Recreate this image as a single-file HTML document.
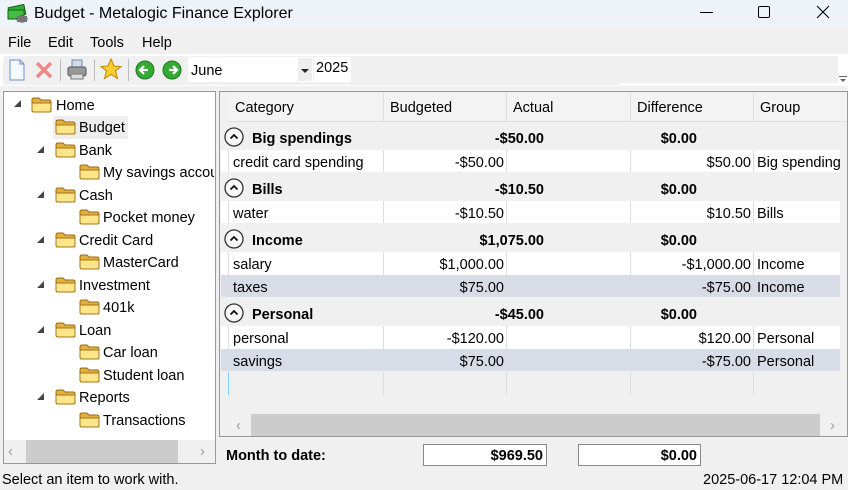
<!DOCTYPE html>
<html><head><meta charset="utf-8"><style>
*{margin:0;padding:0;box-sizing:border-box}
body{width:848px;height:485px;overflow:hidden;background:#f0f0f0;font-family:"Liberation Sans",sans-serif;font-size:14.5px;color:#000;position:relative}
.a{position:absolute;white-space:nowrap;line-height:1.4}
.fold{position:absolute;width:21px;height:16px}
.tri{position:absolute;width:0;height:0;border-left:7px solid transparent;border-bottom:7px solid #444}
.cell{position:absolute;height:100%;top:0;line-height:22px;padding:2px 3px 0;overflow:hidden;white-space:nowrap}
.r{text-align:right}
.row{position:absolute;left:221px;width:619px;overflow:hidden}
.g{background:#f0f0f0;font-weight:bold}
.w{background:#fff}
.s{background:#d8dce6}
.circ{position:absolute;left:3px;top:2px;width:20px;height:20px}
.vl{position:absolute;top:0;height:100%;width:1px;background:#ddd}
</style></head><body>
<div class="a" style="left:0;top:0;width:848px;height:28px;background:#eef3f9"></div>
<svg class="a" style="left:7px;top:4px" width="22" height="20"><rect x="2" y="2" width="16" height="10" fill="#3a3" stroke="#161" transform="rotate(-12 10 7)"/><rect x="1" y="6" width="16" height="9" fill="#4b4" stroke="#161"/><ellipse cx="15" cy="15" rx="5" ry="3" fill="#888" stroke="#333"/><rect x="10" y="12" width="10" height="6" fill="#777"/></svg>
<div class="a" style="left:34px;top:3px;font-size:16px">Budget - Metalogic Finance Explorer</div>
<div class="a" style="left:700px;top:12px;width:13px;height:1px;background:#000"></div>
<div class="a" style="left:758px;top:6px;width:12px;height:12px;border:1px solid #000;border-radius:2px"></div>
<svg class="a" style="left:816px;top:5px" width="14" height="14"><path d="M1 1L13 13M13 1L1 13" stroke="#000" stroke-width="1.1"/></svg>
<div class="a" style="left:0;top:31px;width:848px;height:23px;background:#f0f0f0"></div>
<div class="a" style="left:8px;top:33px">File</div>
<div class="a" style="left:48px;top:33px">Edit</div>
<div class="a" style="left:90px;top:33px">Tools</div>
<div class="a" style="left:142px;top:33px">Help</div>
<div class="a" style="left:0;top:54px;width:848px;height:32px;background:#fff"></div>
<div class="a" style="left:3px;top:56px;width:214px;height:29px;background:#f0f0f0;border-radius:3px"></div>
<div class="a" style="left:217px;top:56px;width:403px;height:29px;background:#f0f0f0"></div>
<div class="a" style="left:620px;top:56px;width:218px;height:27px;background:#f0f0f0"></div>
<svg class="a" style="left:8px;top:59px" width="18" height="22"><path d="M2 1H12L16 5V21H2Z" fill="#f4f8ff" stroke="#6a8fc8"/><path d="M12 1V5H16" fill="none" stroke="#6a8fc8"/></svg>
<svg class="a" style="left:35px;top:61px" width="18" height="18"><path d="M2 2L16 16M16 2L2 16" stroke="#e88" stroke-width="3.5"/></svg>
<div class="a" style="left:60px;top:59px;width:1px;height:22px;background:#bbb"></div>
<svg class="a" style="left:66px;top:59px" width="22" height="22"><rect x="6" y="1" width="10" height="8" fill="#cde" stroke="#789"/><rect x="2" y="8" width="18" height="9" rx="2" fill="#999" stroke="#555"/><rect x="5" y="15" width="12" height="5" fill="#ddd" stroke="#777"/></svg>
<div class="a" style="left:94px;top:59px;width:1px;height:22px;background:#bbb"></div>
<svg class="a" style="left:100px;top:58px" width="22" height="22"><path d="M11 1L14 8L21 8.5L15.5 13L17.5 20.5L11 16.5L4.5 20.5L6.5 13L1 8.5L8 8Z" fill="#fc3" stroke="#b80"/></svg>
<div class="a" style="left:128px;top:59px;width:1px;height:22px;background:#bbb"></div>
<svg class="a" style="left:135px;top:60px" width="20" height="20"><circle cx="10" cy="10" r="9" fill="#3a3" stroke="#272"/><path d="M13 10H6M9 6L5 10L9 14" stroke="#fff" stroke-width="2.2" fill="none"/></svg>
<svg class="a" style="left:162px;top:60px" width="20" height="20"><circle cx="10" cy="10" r="9" fill="#3a3" stroke="#272"/><path d="M7 10H14M11 6L15 10L11 14" stroke="#fff" stroke-width="2.2" fill="none"/></svg>
<div class="a" style="left:188px;top:57px;width:125px;height:25px;background:#fff"></div>
<div class="a" style="left:191px;top:61px">June</div>
<div class="a" style="left:298px;top:58px;width:14px;height:23px;background:#eee"></div>
<div class="a" style="left:301px;top:69px;border-left:4px solid transparent;border-right:4px solid transparent;border-top:4px solid #222"></div>
<div class="a" style="left:314px;top:57px;width:37px;height:25px;background:#fff"></div>
<div class="a" style="left:316px;top:58px">2025</div>
<div class="a" style="left:839px;top:76px;width:8px;height:1px;background:#666"></div>
<div class="a" style="left:840px;top:79px;border-left:3px solid transparent;border-right:3px solid transparent;border-top:3px solid #666"></div>
<div class="a" style="left:3px;top:91px;width:213px;height:373px;background:#fff;border:1px solid #999"></div>
<div class="a" style="left:53px;top:116px;width:75px;height:23px;background:#eee"></div>
<svg width="0" height="0" style="position:absolute"><defs><symbol id="f" viewBox="0 0 21 16"><path d="M1 3Q1 1 3 1H8L10 3H18Q20 3 20 5V14Q20 15 18 15H3Q1 15 1 13Z" fill="#e0b040" stroke="#9a6a10"/><path d="M1 6H20V13Q20 15 18 15H3Q1 15 1 13Z" fill="#fde68a" stroke="#a87418"/></symbol></defs></svg>
<div class="tri" style="left:14px;top:100px"></div>
<svg class="fold" style="left:31px;top:97px"><use href="#f"/></svg><div class="a" style="left:56px;top:96px">Home</div>
<svg class="fold" style="left:55px;top:119px"><use href="#f"/></svg><div class="a" style="left:79px;top:118px">Budget</div>
<div class="tri" style="left:37px;top:146px"></div>
<svg class="fold" style="left:55px;top:142px"><use href="#f"/></svg><div class="a" style="left:79px;top:141px">Bank</div>
<svg class="fold" style="left:79px;top:164px"><use href="#f"/></svg><div class="a" style="left:103px;top:163px;width:111px;overflow:hidden">My savings account</div>
<div class="tri" style="left:37px;top:191px"></div>
<svg class="fold" style="left:55px;top:187px"><use href="#f"/></svg><div class="a" style="left:79px;top:186px">Cash</div>
<svg class="fold" style="left:79px;top:209px"><use href="#f"/></svg><div class="a" style="left:103px;top:208px">Pocket money</div>
<div class="tri" style="left:37px;top:236px"></div>
<svg class="fold" style="left:55px;top:232px"><use href="#f"/></svg><div class="a" style="left:79px;top:231px">Credit Card</div>
<svg class="fold" style="left:79px;top:254px"><use href="#f"/></svg><div class="a" style="left:103px;top:253px">MasterCard</div>
<div class="tri" style="left:37px;top:281px"></div>
<svg class="fold" style="left:55px;top:277px"><use href="#f"/></svg><div class="a" style="left:79px;top:276px">Investment</div>
<svg class="fold" style="left:79px;top:299px"><use href="#f"/></svg><div class="a" style="left:103px;top:298px">401k</div>
<div class="tri" style="left:37px;top:326px"></div>
<svg class="fold" style="left:55px;top:322px"><use href="#f"/></svg><div class="a" style="left:79px;top:321px">Loan</div>
<svg class="fold" style="left:79px;top:344px"><use href="#f"/></svg><div class="a" style="left:103px;top:343px">Car loan</div>
<svg class="fold" style="left:79px;top:367px"><use href="#f"/></svg><div class="a" style="left:103px;top:366px">Student loan</div>
<div class="tri" style="left:37px;top:393px"></div>
<svg class="fold" style="left:55px;top:389px"><use href="#f"/></svg><div class="a" style="left:79px;top:388px">Reports</div>
<svg class="fold" style="left:79px;top:412px"><use href="#f"/></svg><div class="a" style="left:103px;top:411px">Transactions</div>
<div class="a" style="left:4px;top:440px;width:211px;height:23px;background:#f0f0f0"></div>
<div class="a" style="left:26px;top:440px;width:152px;height:23px;background:#ccc"></div>
<div class="a" style="left:8px;top:442px;color:#999">‹</div>
<div class="a" style="left:200px;top:442px;color:#999">›</div>
<div class="a" style="left:219px;top:91px;width:629px;height:346px;background:#f0f0f0;border:1px solid #999"></div>
<div class="a" style="left:228px;top:93px;width:619px;height:29px;background:#f3f3f3;border-bottom:1px solid #ddd"></div>
<div class="a" style="left:383px;top:93px;width:1px;height:29px;background:#ddd"></div>
<div class="a" style="left:506px;top:93px;width:1px;height:29px;background:#ddd"></div>
<div class="a" style="left:630px;top:93px;width:1px;height:29px;background:#ddd"></div>
<div class="a" style="left:753px;top:93px;width:1px;height:29px;background:#ddd"></div>
<div class="a" style="left:235px;top:98px">Category</div>
<div class="a" style="left:390px;top:98px">Budgeted</div>
<div class="a" style="left:513px;top:98px">Actual</div>
<div class="a" style="left:637px;top:98px">Difference</div>
<div class="a" style="left:760px;top:98px">Group</div>

<svg width="0" height="0" style="position:absolute"><defs><symbol id="c" viewBox="0 0 20 20"><circle cx="10" cy="10" r="9" fill="#f8f8f8" stroke="#333" stroke-width="1.3"/><path d="M6.5 11.5L10 8L13.5 11.5" fill="none" stroke="#111" stroke-width="1.8"/></symbol></defs></svg>
<div class="row g" style="top:125px;height:24px"><svg class="circ"><use href="#c"/></svg><div class="cell" style="left:28px;line-height:24px">Big spendings</div><div class="cell r" style="left:162px;width:164px;line-height:24px">-$50.00</div><div class="cell r" style="left:409px;width:70px;line-height:24px">$0.00</div></div>
<div class="row w" style="top:150px;height:22px"><div class="vl" style="left:7px"></div><div class="cell" style="left:9px">credit card spending</div><div class="vl" style="left:162px"></div><div class="cell r" style="left:162px;width:124px">-$50.00</div><div class="vl" style="left:285px"></div><div class="vl" style="left:409px"></div><div class="cell r" style="left:409px;width:124px">$50.00</div><div class="vl" style="left:532px"></div><div class="cell" style="left:533px">Big spendings</div></div>
<div class="row g" style="top:176px;height:24px"><svg class="circ"><use href="#c"/></svg><div class="cell" style="left:28px;line-height:24px">Bills</div><div class="cell r" style="left:162px;width:164px;line-height:24px">-$10.50</div><div class="cell r" style="left:409px;width:70px;line-height:24px">$0.00</div></div>
<div class="row w" style="top:201px;height:22px"><div class="vl" style="left:7px"></div><div class="cell" style="left:9px">water</div><div class="vl" style="left:162px"></div><div class="cell r" style="left:162px;width:124px">-$10.50</div><div class="vl" style="left:285px"></div><div class="vl" style="left:409px"></div><div class="cell r" style="left:409px;width:124px">$10.50</div><div class="vl" style="left:532px"></div><div class="cell" style="left:533px">Bills</div></div>
<div class="row g" style="top:227px;height:24px"><svg class="circ"><use href="#c"/></svg><div class="cell" style="left:28px;line-height:24px">Income</div><div class="cell r" style="left:162px;width:164px;line-height:24px">$1,075.00</div><div class="cell r" style="left:409px;width:70px;line-height:24px">$0.00</div></div>
<div class="row w" style="top:252px;height:23px"><div class="vl" style="left:7px"></div><div class="cell" style="left:9px">salary</div><div class="vl" style="left:162px"></div><div class="cell r" style="left:162px;width:124px">$1,000.00</div><div class="vl" style="left:285px"></div><div class="vl" style="left:409px"></div><div class="cell r" style="left:409px;width:124px">-$1,000.00</div><div class="vl" style="left:532px"></div><div class="cell" style="left:533px">Income</div></div>
<div class="row s" style="top:275px;height:22px"><div class="vl" style="left:7px"></div><div class="cell" style="left:9px">taxes</div><div class="vl" style="left:162px"></div><div class="cell r" style="left:162px;width:124px">$75.00</div><div class="vl" style="left:285px"></div><div class="vl" style="left:409px"></div><div class="cell r" style="left:409px;width:124px">-$75.00</div><div class="vl" style="left:532px"></div><div class="cell" style="left:533px">Income</div></div>
<div class="row g" style="top:301px;height:24px"><svg class="circ"><use href="#c"/></svg><div class="cell" style="left:28px;line-height:24px">Personal</div><div class="cell r" style="left:162px;width:164px;line-height:24px">-$45.00</div><div class="cell r" style="left:409px;width:70px;line-height:24px">$0.00</div></div>
<div class="row w" style="top:326px;height:23px"><div class="vl" style="left:7px"></div><div class="cell" style="left:9px">personal</div><div class="vl" style="left:162px"></div><div class="cell r" style="left:162px;width:124px">-$120.00</div><div class="vl" style="left:285px"></div><div class="vl" style="left:409px"></div><div class="cell r" style="left:409px;width:124px">$120.00</div><div class="vl" style="left:532px"></div><div class="cell" style="left:533px">Personal</div></div>
<div class="row s" style="top:349px;height:22px"><div class="vl" style="left:7px"></div><div class="cell" style="left:9px">savings</div><div class="vl" style="left:162px"></div><div class="cell r" style="left:162px;width:124px">$75.00</div><div class="vl" style="left:285px"></div><div class="vl" style="left:409px"></div><div class="cell r" style="left:409px;width:124px">-$75.00</div><div class="vl" style="left:532px"></div><div class="cell" style="left:533px">Personal</div></div>
<div class="row" style="top:372px;height:23px;background:#f0f0f0"><div class="vl" style="left:7px;background:#8cf"></div><div class="vl" style="left:162px"></div><div class="vl" style="left:285px"></div><div class="vl" style="left:409px"></div><div class="vl" style="left:532px"></div></div>
<div class="a" style="left:220px;top:414px;width:627px;height:22px;background:#f0f0f0"></div>
<div class="a" style="left:251px;top:414px;width:569px;height:22px;background:#ccc"></div>
<div class="a" style="left:236px;top:416px;color:#999">‹</div>
<div class="a" style="left:830px;top:416px;color:#999">›</div>
<div class="a" style="left:226px;top:446px;font-weight:bold">Month to date:</div>
<div class="a" style="left:423px;top:444px;width:124px;height:22px;background:#fff;border:1px solid #888;text-align:right;padding:1px 3px 0 0;font-weight:bold;line-height:20px">$969.50</div>
<div class="a" style="left:578px;top:444px;width:123px;height:22px;background:#fff;border:1px solid #888;text-align:right;padding:1px 3px 0 0;font-weight:bold;line-height:20px">$0.00</div>
<div class="a" style="left:0;top:467px;width:848px;height:18px;background:#f0f0f0"></div>
<div class="a" style="left:2px;top:470px">Select an item to work with.</div>
<div class="a" style="left:703px;top:470px">2025-06-17  12:04 PM</div>
</body></html>
